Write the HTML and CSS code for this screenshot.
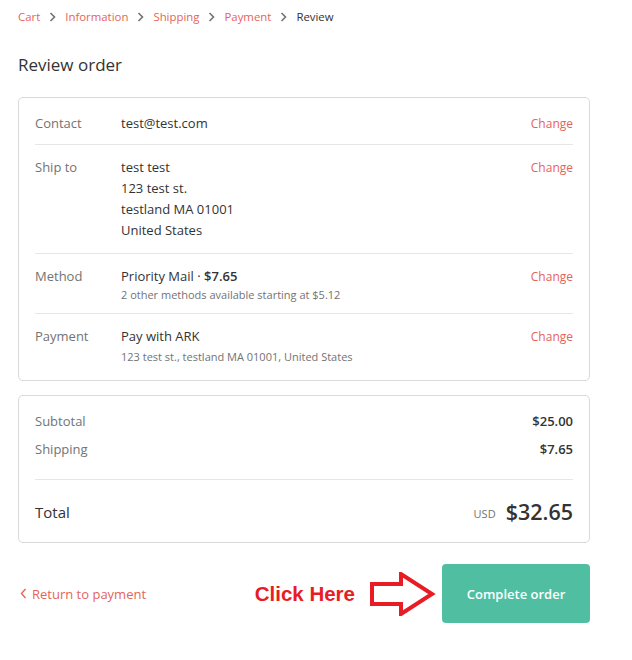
FILE: index.html
```html
<!doctype html>
<html>
  <head>
    <meta charset="UTF-8" />
    <title>Review order</title>
    <link rel="stylesheet" href="styles.css">
  </head>
  <body>
    <div class="main">
      <ul class="crumbs">
        <li><a href="#">Cart</a></li>
        <li class="sep"><svg width="7" height="10" viewBox="0 0 7 10"><path d="M1.5 1l4 4-4 4" fill="none" stroke="#737373" stroke-width="1.6"/></svg></li>
        <li><a href="#">Information</a></li>
        <li class="sep"><svg width="7" height="10" viewBox="0 0 7 10"><path d="M1.5 1l4 4-4 4" fill="none" stroke="#737373" stroke-width="1.6"/></svg></li>
        <li><a href="#">Shipping</a></li>
        <li class="sep"><svg width="7" height="10" viewBox="0 0 7 10"><path d="M1.5 1l4 4-4 4" fill="none" stroke="#737373" stroke-width="1.6"/></svg></li>
        <li><a href="#">Payment</a></li>
        <li class="sep"><svg width="7" height="10" viewBox="0 0 7 10"><path d="M1.5 1l4 4-4 4" fill="none" stroke="#737373" stroke-width="1.6"/></svg></li>
        <li class="current">Review</li>
      </ul>

      <h2 class="title">Review order</h2>

      <div class="card review">
        <div class="row">
          <div class="label">Contact</div>
          <div class="value">test@test.com</div>
          <a class="change" href="#">Change</a>
        </div>
        <div class="row">
          <div class="label">Ship to</div>
          <div class="value">test test<br>123 test st.<br>testland MA 01001<br>United States</div>
          <a class="change" href="#">Change</a>
        </div>
        <div class="row">
          <div class="label">Method</div>
          <div class="value">
            Priority Mail · <b>$7.65</b>
            <div class="sub">2 other methods available starting at $5.12</div>
          </div>
          <a class="change" href="#">Change</a>
        </div>
        <div class="row">
          <div class="label">Payment</div>
          <div class="value">
            Pay with ARK
            <div class="sub sub-gap">123 test st., testland MA 01001, United States</div>
          </div>
          <a class="change" href="#">Change</a>
        </div>
      </div>

      <div class="card totals">
        <div class="line">
          <span class="name">Subtotal</span>
          <span class="amount">$25.00</span>
        </div>
        <div class="line">
          <span class="name">Shipping</span>
          <span class="amount">$7.65</span>
        </div>
        <div class="grand">
          <span class="grand-name">Total</span>
          <span class="grand-amount"><span class="currency">USD</span>$32.65</span>
        </div>
      </div>

      <div class="footer">
        <a class="back" href="#">
          <svg width="7" height="11" viewBox="0 0 7 11"><path d="M5.5 1L1.5 5.5l4 4.5" fill="none" stroke="#e5645a" stroke-width="1.4"/></svg>
          Return to payment
        </a>
        <div class="actions">
          <span class="hint">Click Here</span>
          <svg class="pointer" width="66" height="44" viewBox="0 0 66 44">
            <polygon points="2,12 31,12 31,2 62,22 31,42 31,32 2,32" fill="none" stroke="#e81c24" stroke-width="4" stroke-linejoin="miter"/>
          </svg>
          <button class="complete">Complete order</button>
        </div>
      </div>
    </div>
  </body>
</html>
```

FILE: styles.css
```css
* {
  padding: 0px;
  margin: 0px;
  box-sizing: border-box;
}
body {
  font-family: "Open Sans", "Noto Sans", sans-serif;
  font-size: 13px;
  color: #333;
  background: #fff;
}
a {
  color: #e5645a;
  text-decoration: none;
}
.main {
  width: 572px;
  margin-left: 18px;
  padding-top: 8px;
}
.crumbs {
  list-style: none;
  display: flex;
  align-items: center;
  font-size: 11.4px;
  line-height: 18px;
}
.crumbs .sep {
  display: flex;
  margin: 0 9px 0 9px;
}
.crumbs .current {
  color: #333;
}
.title {
  font-size: 17px;
  font-weight: normal;
  line-height: 24px;
  margin: 27px 0 20px;
  color: #333;
}
.card {
  border: 1px solid #d9d9d9;
  border-radius: 5px;
}
.review {
  padding: 0 16px;
}
.row {
  display: flex;
  align-items: flex-start;
  padding: 12px 0 12px;
  border-bottom: 1px solid #e6e6e6;
  line-height: 21px;
}
.row:first-child {
  padding: 15px 0 10px;
}
.row:nth-child(3) {
  padding: 12px 0 10px;
}
.row:last-child {
  border-bottom: none;
  padding-bottom: 15px;
}
.label {
  width: 86px;
  color: #737373;
}
.value {
  flex: 1;
}
.value b {
  font-weight: 600;
}
.sub {
  font-size: 11px;
  line-height: 16px;
  color: #737373;
}
.sub-gap {
  margin-top: 2px;
}
.change {
  font-size: 12px;
}
.totals {
  margin-top: 14px;
  padding: 15px 16px 12px;
}
.line {
  display: flex;
  justify-content: space-between;
  line-height: 21px;
  margin-bottom: 7px;
}
.line .name {
  color: #737373;
}
.line .amount {
  font-weight: 600;
}
.grand {
  display: flex;
  justify-content: space-between;
  align-items: center;
  border-top: 1px solid #e6e6e6;
  margin-top: 19px;
  padding-top: 14px;
}
.grand-name {
  font-size: 15px;
}
.grand-amount {
  font-size: 21.5px;
  font-weight: 600;
  line-height: 32px;
  display: flex;
  align-items: center;
}
.currency {
  font-size: 11px;
  font-weight: normal;
  color: #737373;
  margin-right: 10px;
  padding-top: 4px;
}
.footer {
  display: flex;
  justify-content: space-between;
  align-items: center;
  margin-top: 21px;
}
.back {
  display: flex;
  align-items: center;
  gap: 5px;
  padding-left: 2px;
}
.actions {
  display: flex;
  align-items: center;
}
.hint {
  color: #e81c24;
  font-family: "Liberation Sans", sans-serif;
  font-weight: bold;
  font-size: 20.5px;
  margin-right: 15px;
}
.pointer {
  margin-right: 6px;
}
.complete {
  width: 148px;
  height: 59px;
  border: none;
  border-radius: 4px;
  background: #50bfa1;
  color: #fff;
  font-family: inherit;
  font-size: 13px;
  font-weight: 600;
  cursor: pointer;
}
```
